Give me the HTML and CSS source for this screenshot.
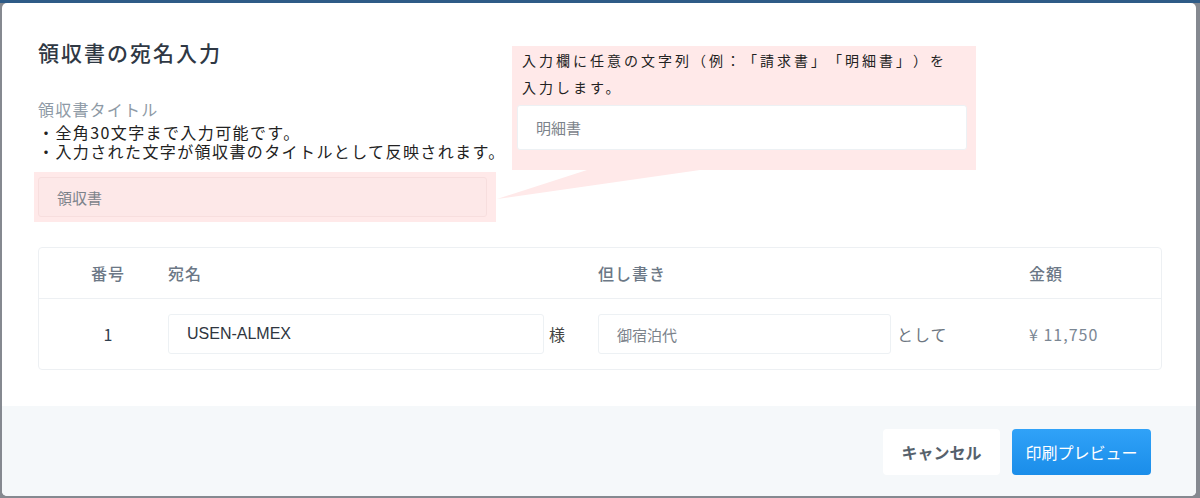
FILE: index.html
```html
<!DOCTYPE html>
<html lang="ja">
<head>
<meta charset="utf-8">
<title>領収書の宛名入力</title>
<link rel="stylesheet" href="styles.css">
</head>
<body>
<div class="modal">
  <div class="modal-header">
    <h1 class="modal-title">領収書の宛名入力</h1>
  </div>
  <div class="modal-body">
    <div class="field-label">領収書タイトル</div>
    <div class="notes">
      <div>・全角30文字まで入力可能です。</div>
      <div>・入力された文字が領収書のタイトルとして反映されます。</div>
    </div>
    <div class="highlight">
      <div class="input input-pink">領収書</div>
    </div>

    <div class="card">
      <div class="grid head">
        <div class="c-no">番号</div>
        <div class="c-name">宛名</div>
        <div class="c-note">但し書き</div>
        <div class="c-amt">金額</div>
      </div>
      <div class="grid row">
        <div class="c-no num">1</div>
        <div class="c-name cell">
          <div class="input input-name">USEN-ALMEX</div>
          <span class="suffix">様</span>
        </div>
        <div class="c-note cell">
          <div class="input input-note">御宿泊代</div>
          <span class="suffix suffix-gray">として</span>
        </div>
        <div class="c-amt amount">¥ 11,750</div>
      </div>
    </div>
  </div>
  <div class="modal-footer">
    <button class="btn btn-cancel">キャンセル</button>
    <button class="btn btn-primary">印刷プレビュー</button>
  </div>

  <div class="callout">
    <div class="callout-text">入力欄に任意の文字列（例：「請求書」「明細書」）を<br>入力します。</div>
    <div class="input input-white">明細書</div>
    <svg class="tail" width="220" height="32" viewBox="0 0 220 32"><polygon points="95,0 208,0 5,29" fill="#ffe9e9"/></svg>
  </div>
</div>
</body>
</html>
```
FILE: styles.css
```css
* { box-sizing: border-box; }
html, body { margin: 0; padding: 0; }
body {
  width: 1200px;
  height: 498px;
  overflow: hidden;
  background: linear-gradient(#2e5b87 0, #2e5b87 3px, #858990 3px);
  font-family: "Noto Sans CJK JP", "Noto Sans", sans-serif;
  color: #2f3640;
  text-spacing-trim: space-all;
  font-feature-settings: "chws" 0, "halt" 0, "palt" 0;
}
.modal {
  position: relative;
  margin: 3px 4px 0 2px;
  height: 493px;
  background: #fff;
  border-radius: 5px;
  display: flex;
  flex-direction: column;
  overflow: hidden;
}
.modal-header { padding: 35px 36px 0; }
.modal-title {
  margin: 0;
  font-size: 21px;
  line-height: 28px;
  font-weight: 500;
  letter-spacing: 2px;
  color: #2f3844;
}
.modal-body {
  flex: 1;
  padding: 0 34px 0 36px;
}
.field-label {
  margin-top: 32px;
  font-size: 16px;
  line-height: 22px;
  letter-spacing: 1.2px;
  color: #8e9aa6;
}
.notes {
  margin-top: 3px;
  font-size: 16px;
  line-height: 19px;
  letter-spacing: 1.4px;
  color: #222;
}
.highlight {
  margin-top: 11px;
  margin-left: -4px;
  width: 462px;
  padding: 5px 9px 5px 4px;
  background: #ffe9e9;
}
.input {
  height: 40px;
  display: flex;
  align-items: center;
  padding-left: 18px;
  border: 1px solid #edf1f4;
  border-radius: 3px;
  background: #fff;
  font-size: 15px;
  color: #7c838b;
}
.input-pink {
  background: #fde8e8;
  border-color: #f7dede;
}
.card {
  margin-top: 25px;
  border: 1px solid #edf0f3;
  border-radius: 4px;
}
.grid {
  display: grid;
  grid-template-columns: 129px 430px 431px 1fr;
  align-items: center;
}
.head {
  height: 51px;
  border-bottom: 1px solid #edf0f3;
  font-size: 16px;
  font-weight: 500;
  letter-spacing: 1px;
  color: #6c7886;
}
.row { height: 70px; }
.c-no { text-align: center; padding-left: 9px; }
.num { font-size: 16px; color: #2f3e4f; }
.cell { display: flex; align-items: center; }
.input-name {
  width: 376px;
  font-family: "Liberation Sans", Arial, sans-serif;
  font-size: 16px;
  color: #2f3640;
}
.input-note { width: 293px; }
.suffix { margin-left: 5px; font-size: 16px; color: #444; }
.suffix-gray { margin-left: 6px; color: #6e7782; letter-spacing: 1px; }
.amount {
  font-size: 16px;
  letter-spacing: 1px;
  color: #7b8794;
}
.modal-footer {
  height: 90px;
  background: #f5f8fa;
  display: flex;
  justify-content: flex-end;
  align-items: flex-start;
  gap: 12px;
  padding: 23px 45px 0 0;
}
.btn {
  height: 46px;
  border: none;
  border-radius: 4px;
  font-family: "Noto Sans CJK JP", "Noto Sans", sans-serif;
  font-size: 16px;
  cursor: pointer;
}
.btn-cancel {
  background: #fff;
  color: #56616c;
  font-weight: 700;
  padding: 0 18px;
  width: 117px;
}
.btn-primary {
  background: linear-gradient(#30a2f8, #1a8de9);
  color: #fff;
  padding: 0 13px;
  width: 139px;
}
.callout {
  position: absolute;
  left: 510px;
  top: 43px;
  width: 464px;
  height: 124px;
  background: #ffe9e9;
  padding: 1px 9px 0 5px;
}
.callout-text {
  padding-left: 5px;
  font-size: 14px;
  line-height: 27px;
  letter-spacing: 3px;
  color: #222;
  white-space: nowrap;
  text-spacing-trim: space-all;
  font-variant-east-asian: full-width;
}
.input-white {
  margin-top: 4px;
  height: 45px;
}
.tail {
  position: absolute;
  left: -20px;
  top: 124px;
  display: block;
}
```
